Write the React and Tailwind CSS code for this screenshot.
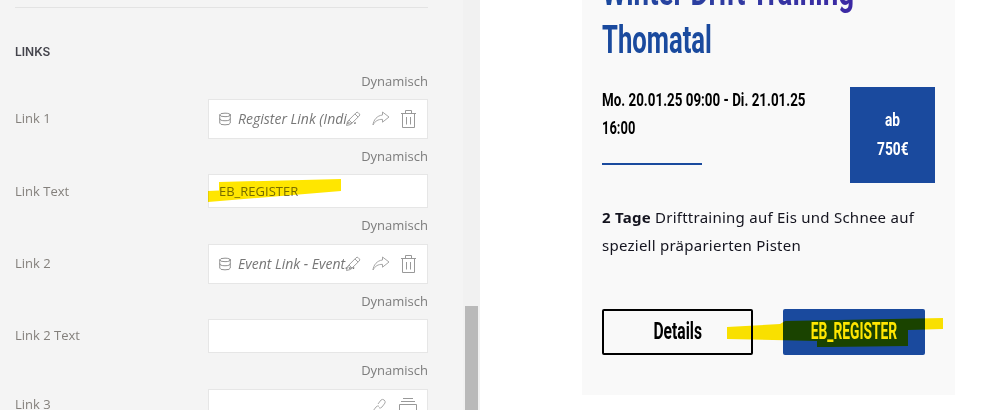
import { Database } from "lucide-react";

const panelFont = "font-['Open_Sans',sans-serif]";
const narrowFont = "font-['Roboto',sans-serif]";

function PencilIcon() {
  return (
    <svg width="16" height="16" viewBox="0 0 16 16" fill="none" stroke="#a0a0a0" strokeWidth="1" className="-ml-[14px] shrink-0">
      <path d="M1.5 14.5l1-4 8.5-8.7a1.6 1.6 0 0 1 2.3 0l.9.9a1.6 1.6 0 0 1 0 2.3l-8.7 8.5z" />
      <path d="M2.8 10.2l3 3M10 3l3 3M4 9l3 3" />
    </svg>
  );
}

function ShareIcon() {
  return (
    <svg width="18" height="15" viewBox="0 0 18 15" fill="none" stroke="#a6a6a6" strokeWidth="1" className="shrink-0">
      <path d="M10.5 1l6.5 5-6.5 5.2V8.4C6 8.2 3.2 10 1 14c.5-5 4-9.4 9.5-10z" />
    </svg>
  );
}

function TrashIcon() {
  return (
    <svg width="15" height="18" viewBox="0 0 15 18" fill="none" stroke="#999999" strokeWidth="1" className="shrink-0">
      <path d="M0 3.5h15M4.5 3.5V.5h6v3M1.5 3.5v14h12v-14M5.5 7v7.5M9.5 7v7.5" />
    </svg>
  );
}

function LinkIcon() {
  return (
    <svg width="16" height="18" viewBox="0 0 16 18" fill="none" stroke="#aaaaaa" strokeWidth="1" className="shrink-0">
      <path d="M7 6l3-4a2.6 2.6 0 0 1 4 3l-3 4a2.6 2.6 0 0 1-3 .8M9 12l-3 4a2.6 2.6 0 0 1-4-3l3-4a2.6 2.6 0 0 1 3-.8" />
    </svg>
  );
}

function ArchiveIcon() {
  return (
    <svg width="18" height="24" viewBox="0 0 18 24" fill="none" stroke="#999999" strokeWidth="1" className="shrink-0">
      <path d="M4 .5h10M2 3.5h14M.5 6.5h17v17H.5z" />
    </svg>
  );
}

function DynamicLabel() {
  return (
    <div className="h-[35.4px] pt-[8px] text-right text-[13px] leading-[18px] text-[#7d7d7d]">
      Dynamisch
    </div>
  );
}

function FieldRow({ label, height, children }) {
  return (
    <div>
      <DynamicLabel />
      <div className="flex items-center">
        <span className="w-[193px] text-[13px] text-[#84807c]">{label}</span>
        <div className={`flex w-[220px] items-center border border-[#e6e6e6] bg-white ${height}`}>
          {children}
        </div>
      </div>
    </div>
  );
}

function LinkValue({ text }) {
  return (
    <div className="flex w-full items-center pl-[9px]">
      <Database size={14} strokeWidth={1.5} className="shrink-0 text-[#808080]" />
      <span className="ml-[6px] w-[121px] truncate text-[14px] italic text-[#777777]">{text}</span>
      <PencilIcon />
      <span className="ml-[11px] flex">
        <ShareIcon />
      </span>
      <span className="ml-[11px] flex">
        <TrashIcon />
      </span>
    </div>
  );
}

function Narrow({ className = "", children }) {
  return (
    <span className={`inline-block whitespace-nowrap ${className}`}>{children}</span>
  );
}

function SettingsPanel() {
  return (
    <div className={`h-full w-[463px] shrink-0 bg-[#f4f4f4] pl-[15px] pt-[7px] ${panelFont}`}>
      <div className="w-[413px]">
        <div className="border-t border-[#e3e3e3]" />
        <h3 className="mt-[37px] font-['Inter',sans-serif] text-[12px] font-semibold leading-[14px] text-[#44444c]">
          LINKS
        </h3>
        <div className="mt-[4.6px]">
          <FieldRow label="Link 1" height="h-[40px]">
            <LinkValue text="Register Link (Individuell)" />
          </FieldRow>
          <FieldRow label="Link Text" height="h-[34px]">
            <span className="pl-[10px] text-[13px] text-[#777777]">EB_REGISTER</span>
          </FieldRow>
          <FieldRow label="Link 2" height="h-[40px]">
            <LinkValue text="Event Link - Event Detail" />
          </FieldRow>
          <FieldRow label="Link 2 Text" height="h-[34px]" />
          <FieldRow label="Link 3" height="h-[32px]">
            <div className="ml-auto mr-[10px] flex items-start gap-[12px] self-start pt-[8px]">
              <LinkIcon />
              <ArchiveIcon />
            </div>
          </FieldRow>
        </div>
      </div>
    </div>
  );
}

function Scrollbar() {
  return (
    <div className="flex h-full w-[17px] shrink-0 flex-col justify-end bg-[#f1f1f1] px-[2px]">
      <div className="h-[104px] w-[13px] bg-[#b9b9b9]" />
    </div>
  );
}

function EventCard() {
  return (
    <div className="flow-root h-[395px] w-[373px] bg-[#f9f9f9] pl-[20px]">
      <h1 className={`-mt-[32px] mb-[23px] ${narrowFont} text-[38px] font-bold leading-[48px] text-[#1a4a9e]`}>
        <Narrow className="block origin-left scale-x-[0.73] bg-gradient-to-r from-[#1a4a9e] to-[#3c28a4] bg-clip-text text-transparent">
          Winter Drift Training
        </Narrow>
        <Narrow className="block origin-left scale-x-[0.675]">Thomatal</Narrow>
      </h1>

      <div className="flex items-start justify-between pr-[20px]">
        <div className="min-w-0 flex-1">
          <div className={`-mt-px ${narrowFont} text-[19px] font-bold leading-[28px] text-black`}>
            <Narrow className="block origin-left scale-x-[0.705]">Mo. 20.01.25 09:00 - Di. 21.01.25</Narrow>
            <Narrow className="block origin-left scale-x-[0.68]">16:00</Narrow>
          </div>
          <div className="mt-[21px] h-[2px] w-[100px] bg-[#1a4a9e]" />
        </div>
        <div className={`flex h-[96px] w-[85px] shrink-0 flex-col items-center justify-center pb-[2px] ${narrowFont} text-[19px] font-bold leading-[29px] text-white bg-[#1a4a9e]`}>
          <Narrow className="scale-x-[0.72]">ab</Narrow>
          <Narrow className="scale-x-[0.72]">750€</Narrow>
        </div>
      </div>

      <p className="mt-[20px] font-['Noto_Sans',sans-serif] text-[15px] tracking-[0.25px] leading-[28px] text-[#14141f]">
        <strong className="font-bold">2 Tage</strong> Drifttraining auf Eis und Schnee auf
        <br />
        speziell präparierten Pisten
      </p>

      <div className="mt-[50px] flex gap-[30px]">
        <div className={`flex h-[46px] w-[151px] items-center justify-center rounded-[2px] border-2 border-black ${narrowFont} text-[23px] font-bold text-black`}>
          <Narrow className="scale-x-[0.68]">Details</Narrow>
        </div>
        <div className={`flex h-[46px] w-[142px] items-center justify-center rounded-[2px] bg-[#1a4a9e] ${narrowFont} text-[23px] font-bold text-white`}>
          <Narrow className="scale-x-[0.6]">EB_REGISTER</Narrow>
        </div>
      </div>
    </div>
  );
}

function MarkerStrokes() {
  return (
    <svg
      width="991"
      height="410"
      viewBox="0 0 991 410"
      className="pointer-events-none absolute left-0 top-0 mix-blend-multiply"
    >
      <path fill="#ffe600" d="M208 191l11-.5V182l122-3v12l-133 11z" />
      <path fill="#ffe600" d="M727 327l53-3 5-3 158-3v11l-35 1v16l-78 1-13 0v-6l-90-2z" />
    </svg>
  );
}

export default function App() {
  return (
    <div className="relative flex h-[410px] w-[991px] overflow-hidden bg-white">
      <SettingsPanel />
      <Scrollbar />
      <main className="flex-1 pl-[102px]">
        <EventCard />
      </main>
      <MarkerStrokes />
    </div>
  );
}
